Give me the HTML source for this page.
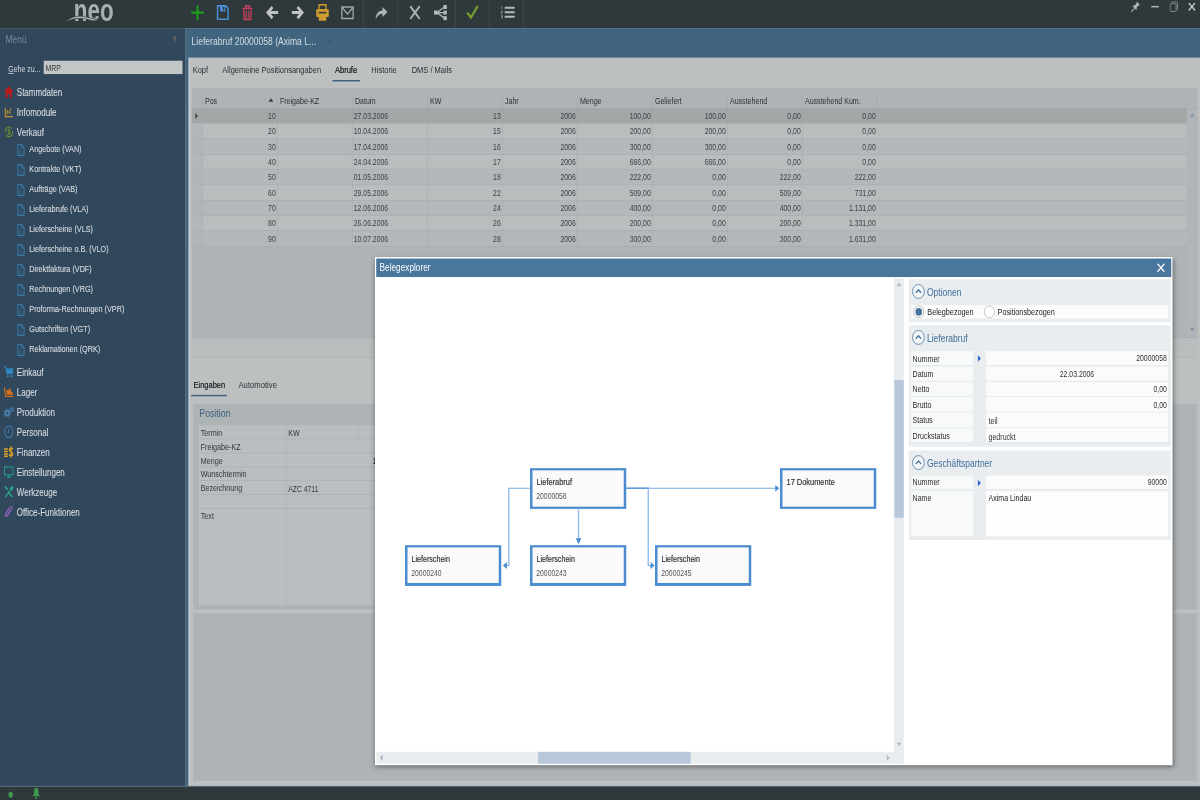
<!DOCTYPE html>
<html><head><meta charset="utf-8"><title>neo</title>
<style>
html,body{margin:0;padding:0;width:1200px;height:800px;overflow:hidden;background:#bcc0c1}
#root{position:absolute;left:0;top:0;width:1920px;height:1080px;transform-origin:0 0;transform:scale(0.625,0.740741);font-family:"Liberation Sans",sans-serif;overflow:hidden;will-change:opacity}
#root>div,#root>svg{position:absolute;display:block}
.t{white-space:nowrap;line-height:20px;height:20px;transform:scaleY(1.09)}
</style></head><body><div id="root">
<div style="left:0.0px;top:0.0px;width:1920.0px;height:37.8px;background:#2f393c"></div>
<div style="left:0.0px;top:37.8px;width:296.96px;height:1023.3px;background:#31475c"></div>
<div style="left:296.96px;top:37.8px;width:1623.04px;height:40.5px;background:#41647f"></div>
<div style="left:296.96px;top:78.3px;width:5.44px;height:982.8px;background:#41647f"></div>
<div style="left:302.24px;top:78.03px;width:1617.76px;height:983.07px;background:#bcc0c1"></div>
<div style="left:302.24px;top:78.03px;width:1.28px;height:983.07px;background:#cdd0d1"></div>
<div style="left:0.0px;top:1060.56px;width:1920.0px;height:1.22px;background:#3f6079"></div>
<div style="left:0.0px;top:1061.78px;width:1920.0px;height:18.22px;background:#2f393c"></div>
<div style="left:117.76px;top:-7.56px;font-size:43px;line-height:43px;height:43px;font-weight:bold;color:#a9aeb0;white-space:nowrap;transform-origin:0 0;transform:scaleX(.835)">neo</div>
<svg style="left:100px;top:15px" width="70" height="20"><path d="M6.2 14.3C10.4 10.99 15.07 8.63 19.27 7.84C27.21 6.9 36.54 7.68 44.01 9.65C48.68 10.99 53.34 12.02 57.08 10.36C53.34 13.51 47.74 12.72 43.08 11.54C36.54 9.73 28.14 9.18 19.74 10.05C15.07 10.6 10.4 12.33 6.2 14.3Z" fill="#a9aeb0" stroke="#2f393c" stroke-width="1.6" paint-order="stroke"/></svg>
<svg style="left:302.84px;top:3.74px" width="26" height="26" viewBox="0 0 26 26"><path d="M13 3.5V22.5M3 13H23" stroke="#1d9e1d" stroke-width="3.2" fill="none"/></svg>
<svg style="left:343.16px;top:3.74px" width="26" height="26" viewBox="0 0 26 26"><path d="M5 4H18.5L22 7.5V22H5Z" fill="none" stroke="#4a8fd6" stroke-width="2.2"/><rect x="9" y="4" width="8.5" height="7.5" fill="#4a8fd6"/><rect x="13.6" y="5.3" width="2.2" height="4.6" fill="#2f393c"/></svg>
<svg style="left:383.0px;top:3.74px" width="26" height="26" viewBox="0 0 26 26"><path d="M5 7.5H21M10 7V4.3H16V7" stroke="#c8405f" stroke-width="2.2" fill="none"/><path d="M7 9.5L7.8 22.2H18.2L19 9.5" fill="none" stroke="#c8405f" stroke-width="2.2"/><path d="M11 10.5V20.5M15 10.5V20.5" stroke="#c8405f" stroke-width="1.9"/></svg>
<svg style="left:422.84px;top:3.74px" width="26" height="26" viewBox="0 0 26 26"><path d="M22 13H8" stroke="#c0c3c4" stroke-width="4" fill="none"/><path d="M13 5.5L5.5 13L13 20.5" stroke="#c0c3c4" stroke-width="4" fill="none"/></svg>
<svg style="left:463.16px;top:3.74px" width="26" height="26" viewBox="0 0 26 26"><path d="M4 13H18" stroke="#c0c3c4" stroke-width="4" fill="none"/><path d="M13 5.5L20.5 13L13 20.5" stroke="#c0c3c4" stroke-width="4" fill="none"/></svg>
<svg style="left:503.0px;top:3.74px" width="26" height="26" viewBox="0 0 26 26"><rect x="7.5" y="2.5" width="11" height="7" fill="none" stroke="#cf9a2e" stroke-width="2.2"/><rect x="3" y="8.5" width="20" height="10.5" rx="1.5" fill="#cf9a2e"/><rect x="7" y="12" width="12" height="2.2" fill="#2f393c"/><rect x="7" y="16.5" width="12" height="7.5" fill="#cf9a2e"/></svg>
<svg style="left:542.84px;top:3.74px" width="26" height="26" viewBox="0 0 26 26"><rect x="4" y="5.5" width="18" height="15.5" fill="none" stroke="#a4a9ab" stroke-width="2"/><path d="M4.5 6.5L13 15L21.5 6.5" fill="none" stroke="#a4a9ab" stroke-width="2"/></svg>
<svg style="left:596.92px;top:3.74px" width="26" height="26" viewBox="0 0 26 26"><path d="M4 22C4.5 14 9 10.2 15 10.2V5.5L23 12.3L15 19V14.6C10.5 14.6 7 16.8 4 22Z" fill="#b0b4b6"/></svg>
<svg style="left:651.0px;top:3.74px" width="26" height="26" viewBox="0 0 26 26"><path d="M5.5 4.5L20.5 21.5M20.5 4.5L5.5 21.5" stroke="#adb1b3" stroke-width="3" fill="none"/></svg>
<svg style="left:691.8px;top:3.74px" width="26" height="26" viewBox="0 0 26 26"><path d="M7 13L19 5.5M7 13H19M7 13L19 20.5" stroke="#b5b9ba" stroke-width="1.7" fill="none"/><rect x="2.5" y="10.2" width="5.6" height="5.6" fill="#b5b9ba"/><rect x="17.5" y="2.8" width="5.4" height="5.4" fill="#b5b9ba"/><rect x="17.5" y="10.3" width="5.4" height="5.4" fill="#b5b9ba"/><rect x="17.5" y="17.8" width="5.4" height="5.4" fill="#b5b9ba"/></svg>
<svg style="left:743.48px;top:3.74px" width="26" height="26" viewBox="0 0 26 26"><path d="M4.5 13L10.5 19.5L21.5 4" stroke="#739c2c" stroke-width="3.5" fill="none"/></svg>
<svg style="left:799.0px;top:3.74px" width="26" height="26" viewBox="0 0 26 26"><path d="M8.5 6.5H24.5M8.5 12.6H24.5M8.5 18.7H24.5" stroke="#b5b9ba" stroke-width="2.6" fill="none"/><path d="M3.7 4.5V8.2M2.8 10.8H4.8V12.5H2.8V14.3H4.8M2.8 17H4.8V20.5H2.8M3.2 18.7H4.8" stroke="#b5b9ba" stroke-width="0.9" fill="none"/></svg>
<div style="left:581.44px;top:0.0px;width:0.96px;height:37.8px;background:#454f52"></div>
<div style="left:635.68px;top:0.0px;width:0.96px;height:37.8px;background:#454f52"></div>
<div style="left:728.48px;top:0.0px;width:0.96px;height:37.8px;background:#454f52"></div>
<div style="left:782.4px;top:0.0px;width:0.96px;height:37.8px;background:#454f52"></div>
<div style="left:837.44px;top:0.0px;width:0.96px;height:37.8px;background:#454f52"></div>
<svg style="left:1808.8px;top:0.78px" width="16" height="16" viewBox="0 0 16 16"><path d="M10 1L15 6L12.5 6.5L9.5 9.5C10 11 9.5 12.5 9 13L3 7C3.5 6.5 5 6 6.5 6.5L9.5 3.5Z" fill="#b5b9ba"/><path d="M5.5 10.5L1 15" stroke="#b5b9ba" stroke-width="1.4"/></svg>
<div style="left:1841.6px;top:8.37px;width:12.8px;height:1.89px;background:#b5b9ba"></div>
<svg style="left:1870.6px;top:0.78px" width="14" height="16" viewBox="0 0 14 16"><path d="M4 4V2.5Q4 1.5 5 1.5H12Q13 1.5 13 2.5V11Q13 12 12 12H11" fill="none" stroke="#8a9194" stroke-width="1.3"/><rect x="1.2" y="4" width="9.5" height="10.5" rx="1" fill="none" stroke="#8a9194" stroke-width="1.3"/></svg>
<svg style="left:1900.2px;top:2.45px" width="14" height="14" viewBox="0 0 14 14"><path d="M2 2L12 12M12 2L2 12" stroke="#c4c7c8" stroke-width="2" fill="none"/></svg>
<div class="t" style="left:8.8px;top:44.27px;font-size:13.5px;color:#74899c;">Menü</div>
<svg style="left:276.48px;top:48.0px" width="8" height="12" viewBox="0 0 8 12"><path d="M2.5 1H5.5V5L7 6.5H1L2.5 5Z M4 6.5V11" fill="#5f6468" stroke="#5f6468" stroke-width="0.8"/></svg>
<div class="t" style="left:13.12px;top:82.61px;font-size:11.2px;color:#d3d9de;"><u>G</u>ehe zu...</div>
<div style="left:70.4px;top:82.35px;width:221.6px;height:17.55px;background:#c3c6c7"></div>
<div class="t" style="left:72.8px;top:81.53px;font-size:11px;color:#333;">MRP</div>
<svg style="left:5.76px;top:115.2px" width="16" height="18" viewBox="0 0 16 18"><path d="M8 1L0.5 9H3V17H6.5V12H9.5V17H13V9H15.5Z" fill="#b81c1c"/></svg>
<div class="t" style="left:26.88px;top:114.74px;font-size:12.8px;color:#d6dce1;-webkit-text-stroke:0.15px #d6dce1">Stammdaten</div>
<svg style="left:5.76px;top:142.2px" width="16" height="18" viewBox="0 0 16 18"><path d="M2.5 3.5V15.3H14.5" fill="none" stroke="#c9962f" stroke-width="1.7"/><path d="M5.5 12.5V7L10 11.5V5.5L12.5 4.5" fill="none" stroke="#c9962f" stroke-width="1.3"/></svg>
<div class="t" style="left:26.88px;top:141.74px;font-size:12.8px;color:#d6dce1;-webkit-text-stroke:0.15px #d6dce1">Infomodule</div>
<svg style="left:5.76px;top:169.2px" width="16" height="18" viewBox="0 0 16 18"><ellipse cx="8.3" cy="9" rx="5.9" ry="6.6" fill="none" stroke="#6f9a28" stroke-width="1.5" stroke-dasharray="15 3.6"/><path d="M10.3 7C10 5.6 6.4 5.6 6.4 7.4C6.4 9.2 10.3 8.8 10.3 10.8C10.3 12.6 6.6 12.6 6.2 11.2M8.3 4.5V13.5" fill="none" stroke="#6f9a28" stroke-width="1.2"/></svg>
<div class="t" style="left:26.88px;top:168.74px;font-size:12.8px;color:#d6dce1;-webkit-text-stroke:0.15px #d6dce1">Verkauf</div>
<svg style="left:27.1px;top:193.87px" width="13" height="17" viewBox="0 0 13 17"><path d="M1.5 1.2H7.5L11.5 5.2V15.8H1.5Z" fill="none" stroke="#3a7aaa" stroke-width="1.6"/><path d="M7 1.2V5.8H11.5" fill="none" stroke="#3a7aaa" stroke-width="1.2"/><path d="M3.8 10H9M3.8 12.8H9" stroke="#3a7aaa" stroke-width="1"/></svg>
<div class="t" style="left:46.88px;top:191.02px;font-size:11.6px;color:#d6dce1;-webkit-text-stroke:0.15px #d6dce1">Angebote (VAN)</div>
<svg style="left:27.1px;top:220.87px" width="13" height="17" viewBox="0 0 13 17"><path d="M1.5 1.2H7.5L11.5 5.2V15.8H1.5Z" fill="none" stroke="#3a7aaa" stroke-width="1.6"/><path d="M7 1.2V5.8H11.5" fill="none" stroke="#3a7aaa" stroke-width="1.2"/><path d="M3.8 10H9M3.8 12.8H9" stroke="#3a7aaa" stroke-width="1"/></svg>
<div class="t" style="left:46.88px;top:218.02px;font-size:11.6px;color:#d6dce1;-webkit-text-stroke:0.15px #d6dce1">Kontrakte (VKT)</div>
<svg style="left:27.1px;top:247.87px" width="13" height="17" viewBox="0 0 13 17"><path d="M1.5 1.2H7.5L11.5 5.2V15.8H1.5Z" fill="none" stroke="#3a7aaa" stroke-width="1.6"/><path d="M7 1.2V5.8H11.5" fill="none" stroke="#3a7aaa" stroke-width="1.2"/><path d="M3.8 10H9M3.8 12.8H9" stroke="#3a7aaa" stroke-width="1"/></svg>
<div class="t" style="left:46.88px;top:245.02px;font-size:11.6px;color:#d6dce1;-webkit-text-stroke:0.15px #d6dce1">Aufträge (VAB)</div>
<svg style="left:27.1px;top:274.87px" width="13" height="17" viewBox="0 0 13 17"><path d="M1.5 1.2H7.5L11.5 5.2V15.8H1.5Z" fill="none" stroke="#3a7aaa" stroke-width="1.6"/><path d="M7 1.2V5.8H11.5" fill="none" stroke="#3a7aaa" stroke-width="1.2"/><path d="M3.8 10H9M3.8 12.8H9" stroke="#3a7aaa" stroke-width="1"/></svg>
<div class="t" style="left:46.88px;top:272.02px;font-size:11.6px;color:#d6dce1;-webkit-text-stroke:0.15px #d6dce1">Lieferabrufe (VLA)</div>
<svg style="left:27.1px;top:301.87px" width="13" height="17" viewBox="0 0 13 17"><path d="M1.5 1.2H7.5L11.5 5.2V15.8H1.5Z" fill="none" stroke="#3a7aaa" stroke-width="1.6"/><path d="M7 1.2V5.8H11.5" fill="none" stroke="#3a7aaa" stroke-width="1.2"/><path d="M3.8 10H9M3.8 12.8H9" stroke="#3a7aaa" stroke-width="1"/></svg>
<div class="t" style="left:46.88px;top:299.02px;font-size:11.6px;color:#d6dce1;-webkit-text-stroke:0.15px #d6dce1">Lieferscheine (VLS)</div>
<svg style="left:27.1px;top:328.87px" width="13" height="17" viewBox="0 0 13 17"><path d="M1.5 1.2H7.5L11.5 5.2V15.8H1.5Z" fill="none" stroke="#3a7aaa" stroke-width="1.6"/><path d="M7 1.2V5.8H11.5" fill="none" stroke="#3a7aaa" stroke-width="1.2"/><path d="M3.8 10H9M3.8 12.8H9" stroke="#3a7aaa" stroke-width="1"/></svg>
<div class="t" style="left:46.88px;top:326.02px;font-size:11.6px;color:#d6dce1;-webkit-text-stroke:0.15px #d6dce1">Lieferscheine o.B. (VLO)</div>
<svg style="left:27.1px;top:355.87px" width="13" height="17" viewBox="0 0 13 17"><path d="M1.5 1.2H7.5L11.5 5.2V15.8H1.5Z" fill="none" stroke="#3a7aaa" stroke-width="1.6"/><path d="M7 1.2V5.8H11.5" fill="none" stroke="#3a7aaa" stroke-width="1.2"/><path d="M3.8 10H9M3.8 12.8H9" stroke="#3a7aaa" stroke-width="1"/></svg>
<div class="t" style="left:46.88px;top:353.01px;font-size:11.6px;color:#d6dce1;-webkit-text-stroke:0.15px #d6dce1">Direktfaktura (VDF)</div>
<svg style="left:27.1px;top:382.87px" width="13" height="17" viewBox="0 0 13 17"><path d="M1.5 1.2H7.5L11.5 5.2V15.8H1.5Z" fill="none" stroke="#3a7aaa" stroke-width="1.6"/><path d="M7 1.2V5.8H11.5" fill="none" stroke="#3a7aaa" stroke-width="1.2"/><path d="M3.8 10H9M3.8 12.8H9" stroke="#3a7aaa" stroke-width="1"/></svg>
<div class="t" style="left:46.88px;top:380.01px;font-size:11.6px;color:#d6dce1;-webkit-text-stroke:0.15px #d6dce1">Rechnungen (VRG)</div>
<svg style="left:27.1px;top:409.87px" width="13" height="17" viewBox="0 0 13 17"><path d="M1.5 1.2H7.5L11.5 5.2V15.8H1.5Z" fill="none" stroke="#3a7aaa" stroke-width="1.6"/><path d="M7 1.2V5.8H11.5" fill="none" stroke="#3a7aaa" stroke-width="1.2"/><path d="M3.8 10H9M3.8 12.8H9" stroke="#3a7aaa" stroke-width="1"/></svg>
<div class="t" style="left:46.88px;top:407.01px;font-size:11.6px;color:#d6dce1;-webkit-text-stroke:0.15px #d6dce1">Proforma-Rechnungen (VPR)</div>
<svg style="left:27.1px;top:436.87px" width="13" height="17" viewBox="0 0 13 17"><path d="M1.5 1.2H7.5L11.5 5.2V15.8H1.5Z" fill="none" stroke="#3a7aaa" stroke-width="1.6"/><path d="M7 1.2V5.8H11.5" fill="none" stroke="#3a7aaa" stroke-width="1.2"/><path d="M3.8 10H9M3.8 12.8H9" stroke="#3a7aaa" stroke-width="1"/></svg>
<div class="t" style="left:46.88px;top:434.01px;font-size:11.6px;color:#d6dce1;-webkit-text-stroke:0.15px #d6dce1">Gutschriften (VGT)</div>
<svg style="left:27.1px;top:463.87px" width="13" height="17" viewBox="0 0 13 17"><path d="M1.5 1.2H7.5L11.5 5.2V15.8H1.5Z" fill="none" stroke="#3a7aaa" stroke-width="1.6"/><path d="M7 1.2V5.8H11.5" fill="none" stroke="#3a7aaa" stroke-width="1.2"/><path d="M3.8 10H9M3.8 12.8H9" stroke="#3a7aaa" stroke-width="1"/></svg>
<div class="t" style="left:46.88px;top:461.01px;font-size:11.6px;color:#d6dce1;-webkit-text-stroke:0.15px #d6dce1">Reklamationen (QRK)</div>
<svg style="left:5.76px;top:493.2px" width="16" height="18" viewBox="0 0 16 18"><path d="M0.5 2H3L5 11H13.5L15 5H4" fill="none" stroke="#2f86c0" stroke-width="1.6"/><path d="M4.5 5.5H14.5L13.3 10.5H5.5Z" fill="#2f86c0"/><circle cx="6.5" cy="14.5" r="1.7" fill="#2f86c0"/><circle cx="12.5" cy="14.5" r="1.7" fill="#2f86c0"/></svg>
<div class="t" style="left:26.88px;top:492.74px;font-size:12.8px;color:#d6dce1;-webkit-text-stroke:0.15px #d6dce1">Einkauf</div>
<svg style="left:5.76px;top:520.2px" width="16" height="18" viewBox="0 0 16 18"><path d="M1 3L3 15H15" fill="none" stroke="#d8701a" stroke-width="1.8"/><path d="M5 13L4 6L8 7.5L8.5 4L12 6L11.5 9.5L15 10L14.5 13Z" fill="#d8701a"/></svg>
<div class="t" style="left:26.88px;top:519.74px;font-size:12.8px;color:#d6dce1;-webkit-text-stroke:0.15px #d6dce1">Lager</div>
<svg style="left:5.76px;top:547.2px" width="16" height="18" viewBox="0 0 16 18"><circle cx="5.6" cy="10.6" r="4.4" fill="none" stroke="#4a86b8" stroke-width="2" stroke-dasharray="2 1.45"/><circle cx="5.6" cy="10.6" r="2.9" fill="none" stroke="#4a86b8" stroke-width="2"/><circle cx="12.8" cy="5.8" r="2.9" fill="none" stroke="#4a86b8" stroke-width="1.4" stroke-dasharray="1.4 0.88"/><circle cx="12.8" cy="5.8" r="1.8" fill="none" stroke="#4a86b8" stroke-width="1.3"/></svg>
<div class="t" style="left:26.88px;top:546.74px;font-size:12.8px;color:#d6dce1;-webkit-text-stroke:0.15px #d6dce1">Produktion</div>
<svg style="left:5.76px;top:574.2px" width="16" height="18" viewBox="0 0 16 18"><ellipse cx="8" cy="9" rx="6.8" ry="7.8" fill="none" stroke="#3f7fb5" stroke-width="1.4"/><path d="M8 5V9.5L5.5 11" fill="none" stroke="#3f7fb5" stroke-width="1.3"/></svg>
<div class="t" style="left:26.88px;top:573.74px;font-size:12.8px;color:#d6dce1;-webkit-text-stroke:0.15px #d6dce1">Personal</div>
<svg style="left:5.76px;top:601.2px" width="16" height="18" viewBox="0 0 16 18"><path d="M0.5 5H6.5M0.5 8.5H6.5M0.5 12H6.5M0.5 15H6.5" stroke="#e0a020" stroke-width="2"/><path d="M14.5 5.5C14 3.5 9 3.5 9 6.5C9 9.5 14.5 8.5 14.5 12C14.5 15 9 15 8.5 12.5M11.7 1.5V17" fill="none" stroke="#e0a020" stroke-width="2"/></svg>
<div class="t" style="left:26.88px;top:600.74px;font-size:12.8px;color:#d6dce1;-webkit-text-stroke:0.15px #d6dce1">Finanzen</div>
<svg style="left:5.76px;top:628.2px" width="16" height="18" viewBox="0 0 16 18"><rect x="1" y="2.5" width="14" height="10.5" fill="none" stroke="#1f9a94" stroke-width="1.6"/><path d="M5 16H11M8 13V16" stroke="#1f9a94" stroke-width="1.6"/></svg>
<div class="t" style="left:26.88px;top:627.74px;font-size:12.8px;color:#d6dce1;-webkit-text-stroke:0.15px #d6dce1">Einstellungen</div>
<svg style="left:5.76px;top:655.2px" width="16" height="18" viewBox="0 0 16 18"><path d="M2 2L6 6M13.5 16L7 8.5" stroke="#2aa88a" stroke-width="2.4"/><path d="M2.5 16L9 9M10 8L11 4.5L14 2L15 3L13 5.5L14 6.5" stroke="#2aa88a" stroke-width="2" fill="none"/><path d="M1 1L4.5 2.5L3 4Z" fill="#2aa88a"/></svg>
<div class="t" style="left:26.88px;top:654.74px;font-size:12.8px;color:#d6dce1;-webkit-text-stroke:0.15px #d6dce1">Werkzeuge</div>
<svg style="left:5.76px;top:682.2px" width="16" height="18" viewBox="0 0 16 18"><path d="M11 5.5L5 13C4 14.5 2 13 3 11.5L10 3C12 0.8 15 3 13.2 5.3L6.5 14C4.5 16.5 0.5 14 2.8 11L8.5 4" fill="none" stroke="#8a62b5" stroke-width="1.4"/></svg>
<div class="t" style="left:26.88px;top:681.74px;font-size:12.8px;color:#d6dce1;-webkit-text-stroke:0.15px #d6dce1">Office-Funktionen</div>
<div style="left:0.0px;top:0.0px;width:0.0px;height:0.0px;"></div>
<svg style="left:12.8px;top:1067.58px" width="8" height="10" viewBox="0 0 8 10"><ellipse cx="4" cy="5" rx="3.6" ry="4" fill="#3f9a4c"/></svg>
<svg style="left:51.08px;top:1063.36px" width="14" height="16" viewBox="0 0 14 16"><path d="M7 0.5C4.5 0.5 3.5 3 3.5 6C3.5 9 2.5 11 1 12H13C11.5 11 10.5 9 10.5 6C10.5 3 9.5 0.5 7 0.5Z M5.8 12.8H8.2V15.5H5.8Z" fill="#3f9a4c"/></svg>
<div class="t" style="left:306.4px;top:47.38px;font-size:13.7px;color:#d5dde4;">Lieferabruf 20000058 (Axima L...</div>
<div class="t" style="left:524.0px;top:47.38px;font-size:14px;color:#34527a;">×</div>
<div class="t" style="left:308.32px;top:84.1px;font-size:12px;color:#2b2f31;">Kopf</div>
<div class="t" style="left:355.68px;top:84.1px;font-size:12px;color:#2b2f31;">Allgemeine Positionsangaben</div>
<div class="t" style="left:536.0px;top:84.1px;font-size:12px;color:#15181a;-webkit-text-stroke:0.3px #15181a">Abrufe</div>
<div class="t" style="left:594.08px;top:84.1px;font-size:12px;color:#2b2f31;">Historie</div>
<div class="t" style="left:658.72px;top:84.1px;font-size:12px;color:#2b2f31;">DMS / Mails</div>
<div style="left:531.68px;top:108.0px;width:44.32px;height:2.03px;background:#3d627f"></div>
<div style="left:307.2px;top:119.48px;width:1609.28px;height:336.15px;background:#aeb3b6"></div>
<div style="left:307.2px;top:145.8px;width:1592.0px;height:20.7px;background:#a3a7a8"></div>
<div style="left:307.2px;top:166.5px;width:1592.0px;height:20.7px;background:#b9bdbe"></div>
<div style="left:307.2px;top:166.16px;width:1592.0px;height:0.68px;background:#abafb1"></div>
<div style="left:307.2px;top:187.2px;width:1592.0px;height:20.7px;background:#b4b8ba"></div>
<div style="left:307.2px;top:186.86px;width:1592.0px;height:0.68px;background:#abafb1"></div>
<div style="left:307.2px;top:207.9px;width:1592.0px;height:20.7px;background:#b9bdbe"></div>
<div style="left:307.2px;top:207.56px;width:1592.0px;height:0.68px;background:#abafb1"></div>
<div style="left:307.2px;top:228.6px;width:1592.0px;height:20.7px;background:#b4b8ba"></div>
<div style="left:307.2px;top:228.26px;width:1592.0px;height:0.68px;background:#abafb1"></div>
<div style="left:307.2px;top:249.3px;width:1592.0px;height:20.7px;background:#b9bdbe"></div>
<div style="left:307.2px;top:248.96px;width:1592.0px;height:0.68px;background:#abafb1"></div>
<div style="left:307.2px;top:270.0px;width:1592.0px;height:20.7px;background:#b4b8ba"></div>
<div style="left:307.2px;top:269.66px;width:1592.0px;height:0.68px;background:#abafb1"></div>
<div style="left:307.2px;top:290.7px;width:1592.0px;height:20.7px;background:#b9bdbe"></div>
<div style="left:307.2px;top:290.36px;width:1592.0px;height:0.68px;background:#abafb1"></div>
<div style="left:307.2px;top:311.4px;width:1592.0px;height:20.7px;background:#b4b8ba"></div>
<div style="left:307.2px;top:311.06px;width:1592.0px;height:0.68px;background:#abafb1"></div>
<div style="left:307.2px;top:331.76px;width:1592.0px;height:0.68px;background:#a9adaf"></div>
<div style="left:307.2px;top:145.8px;width:16.4px;height:186.3px;background:rgba(174,179,182,.55)"></div>
<div style="left:307.2px;top:145.8px;width:16.4px;height:20.7px;background:#a3a7a8"></div>
<div style="left:323.12px;top:125.55px;width:0.96px;height:20.25px;background:#a2a7aa"></div>
<div style="left:443.12px;top:125.55px;width:0.96px;height:20.25px;background:#a2a7aa"></div>
<div style="left:563.12px;top:125.55px;width:0.96px;height:20.25px;background:#a2a7aa"></div>
<div style="left:683.12px;top:125.55px;width:0.96px;height:20.25px;background:#a2a7aa"></div>
<div style="left:803.12px;top:125.55px;width:0.96px;height:20.25px;background:#a2a7aa"></div>
<div style="left:923.12px;top:125.55px;width:0.96px;height:20.25px;background:#a2a7aa"></div>
<div style="left:1043.12px;top:125.55px;width:0.96px;height:20.25px;background:#a2a7aa"></div>
<div style="left:1163.12px;top:125.55px;width:0.96px;height:20.25px;background:#a2a7aa"></div>
<div style="left:1283.12px;top:125.55px;width:0.96px;height:20.25px;background:#a2a7aa"></div>
<div style="left:1403.12px;top:125.55px;width:0.96px;height:20.25px;background:#a2a7aa"></div>
<div style="left:323.12px;top:145.8px;width:0.96px;height:186.3px;background:rgba(150,155,158,.45)"></div>
<div style="left:443.12px;top:145.8px;width:0.96px;height:186.3px;background:rgba(150,155,158,.45)"></div>
<div style="left:563.12px;top:145.8px;width:0.96px;height:186.3px;background:rgba(150,155,158,.45)"></div>
<div style="left:683.12px;top:145.8px;width:0.96px;height:186.3px;background:rgba(150,155,158,.45)"></div>
<div style="left:803.12px;top:145.8px;width:0.96px;height:186.3px;background:rgba(150,155,158,.45)"></div>
<div style="left:923.12px;top:145.8px;width:0.96px;height:186.3px;background:rgba(150,155,158,.45)"></div>
<div style="left:1043.12px;top:145.8px;width:0.96px;height:186.3px;background:rgba(150,155,158,.45)"></div>
<div style="left:1163.12px;top:145.8px;width:0.96px;height:186.3px;background:rgba(150,155,158,.45)"></div>
<div style="left:1283.12px;top:145.8px;width:0.96px;height:186.3px;background:rgba(150,155,158,.45)"></div>
<div class="t" style="left:327.92px;top:125.95px;font-size:11.3px;color:#2e3234;">Pos</div>
<div class="t" style="left:447.92px;top:125.95px;font-size:11.3px;color:#2e3234;">Freigabe-KZ</div>
<div class="t" style="left:567.92px;top:125.95px;font-size:11.3px;color:#2e3234;">Datum</div>
<div class="t" style="left:687.92px;top:125.95px;font-size:11.3px;color:#2e3234;">KW</div>
<div class="t" style="left:807.92px;top:125.95px;font-size:11.3px;color:#2e3234;">Jahr</div>
<div class="t" style="left:927.92px;top:125.95px;font-size:11.3px;color:#2e3234;">Menge</div>
<div class="t" style="left:1047.92px;top:125.95px;font-size:11.3px;color:#2e3234;">Geliefert</div>
<div class="t" style="left:1167.92px;top:125.95px;font-size:11.3px;color:#2e3234;">Ausstehend</div>
<div class="t" style="left:1287.92px;top:125.95px;font-size:11.3px;color:#2e3234;">Ausstehend Kum.</div>
<svg style="left:428.78px;top:132.41px" width="9" height="6" viewBox="0 0 9 6"><path d="M0.5 5.5L4.5 0.5L8.5 5.5Z" fill="#3a3e40"/></svg>
<svg style="left:312.38px;top:151.56px" width="5" height="9" viewBox="0 0 5 9"><path d="M0.5 0.5L4.5 4.5L0.5 8.5Z" fill="#3a3e40"/></svg>
<div class="t" style="right:1478.8px;text-align:right;top:146.15px;font-size:11px;color:#3a3f42;">10</div>
<div class="t" style="left:566.0px;top:146.15px;font-size:11px;color:#3a3f42;">27.03.2006</div>
<div class="t" style="right:1118.8px;text-align:right;top:146.15px;font-size:11px;color:#3a3f42;">13</div>
<div class="t" style="right:998.8px;text-align:right;top:146.15px;font-size:11px;color:#3a3f42;">2006</div>
<div class="t" style="right:878.8px;text-align:right;top:146.15px;font-size:11px;color:#3a3f42;">100,00</div>
<div class="t" style="right:758.8px;text-align:right;top:146.15px;font-size:11px;color:#3a3f42;">100,00</div>
<div class="t" style="right:638.8px;text-align:right;top:146.15px;font-size:11px;color:#3a3f42;">0,00</div>
<div class="t" style="right:518.8px;text-align:right;top:146.15px;font-size:11px;color:#3a3f42;">0,00</div>
<div class="t" style="right:1478.8px;text-align:right;top:166.85px;font-size:11px;color:#3a3f42;">20</div>
<div class="t" style="left:566.0px;top:166.85px;font-size:11px;color:#3a3f42;">10.04.2006</div>
<div class="t" style="right:1118.8px;text-align:right;top:166.85px;font-size:11px;color:#3a3f42;">15</div>
<div class="t" style="right:998.8px;text-align:right;top:166.85px;font-size:11px;color:#3a3f42;">2006</div>
<div class="t" style="right:878.8px;text-align:right;top:166.85px;font-size:11px;color:#3a3f42;">200,00</div>
<div class="t" style="right:758.8px;text-align:right;top:166.85px;font-size:11px;color:#3a3f42;">200,00</div>
<div class="t" style="right:638.8px;text-align:right;top:166.85px;font-size:11px;color:#3a3f42;">0,00</div>
<div class="t" style="right:518.8px;text-align:right;top:166.85px;font-size:11px;color:#3a3f42;">0,00</div>
<div class="t" style="right:1478.8px;text-align:right;top:187.55px;font-size:11px;color:#3a3f42;">30</div>
<div class="t" style="left:566.0px;top:187.55px;font-size:11px;color:#3a3f42;">17.04.2006</div>
<div class="t" style="right:1118.8px;text-align:right;top:187.55px;font-size:11px;color:#3a3f42;">16</div>
<div class="t" style="right:998.8px;text-align:right;top:187.55px;font-size:11px;color:#3a3f42;">2006</div>
<div class="t" style="right:878.8px;text-align:right;top:187.55px;font-size:11px;color:#3a3f42;">300,00</div>
<div class="t" style="right:758.8px;text-align:right;top:187.55px;font-size:11px;color:#3a3f42;">300,00</div>
<div class="t" style="right:638.8px;text-align:right;top:187.55px;font-size:11px;color:#3a3f42;">0,00</div>
<div class="t" style="right:518.8px;text-align:right;top:187.55px;font-size:11px;color:#3a3f42;">0,00</div>
<div class="t" style="right:1478.8px;text-align:right;top:208.25px;font-size:11px;color:#3a3f42;">40</div>
<div class="t" style="left:566.0px;top:208.25px;font-size:11px;color:#3a3f42;">24.04.2006</div>
<div class="t" style="right:1118.8px;text-align:right;top:208.25px;font-size:11px;color:#3a3f42;">17</div>
<div class="t" style="right:998.8px;text-align:right;top:208.25px;font-size:11px;color:#3a3f42;">2006</div>
<div class="t" style="right:878.8px;text-align:right;top:208.25px;font-size:11px;color:#3a3f42;">666,00</div>
<div class="t" style="right:758.8px;text-align:right;top:208.25px;font-size:11px;color:#3a3f42;">666,00</div>
<div class="t" style="right:638.8px;text-align:right;top:208.25px;font-size:11px;color:#3a3f42;">0,00</div>
<div class="t" style="right:518.8px;text-align:right;top:208.25px;font-size:11px;color:#3a3f42;">0,00</div>
<div class="t" style="right:1478.8px;text-align:right;top:228.95px;font-size:11px;color:#3a3f42;">50</div>
<div class="t" style="left:566.0px;top:228.95px;font-size:11px;color:#3a3f42;">01.05.2006</div>
<div class="t" style="right:1118.8px;text-align:right;top:228.95px;font-size:11px;color:#3a3f42;">18</div>
<div class="t" style="right:998.8px;text-align:right;top:228.95px;font-size:11px;color:#3a3f42;">2006</div>
<div class="t" style="right:878.8px;text-align:right;top:228.95px;font-size:11px;color:#3a3f42;">222,00</div>
<div class="t" style="right:758.8px;text-align:right;top:228.95px;font-size:11px;color:#3a3f42;">0,00</div>
<div class="t" style="right:638.8px;text-align:right;top:228.95px;font-size:11px;color:#3a3f42;">222,00</div>
<div class="t" style="right:518.8px;text-align:right;top:228.95px;font-size:11px;color:#3a3f42;">222,00</div>
<div class="t" style="right:1478.8px;text-align:right;top:249.65px;font-size:11px;color:#3a3f42;">60</div>
<div class="t" style="left:566.0px;top:249.65px;font-size:11px;color:#3a3f42;">29.05.2006</div>
<div class="t" style="right:1118.8px;text-align:right;top:249.65px;font-size:11px;color:#3a3f42;">22</div>
<div class="t" style="right:998.8px;text-align:right;top:249.65px;font-size:11px;color:#3a3f42;">2006</div>
<div class="t" style="right:878.8px;text-align:right;top:249.65px;font-size:11px;color:#3a3f42;">509,00</div>
<div class="t" style="right:758.8px;text-align:right;top:249.65px;font-size:11px;color:#3a3f42;">0,00</div>
<div class="t" style="right:638.8px;text-align:right;top:249.65px;font-size:11px;color:#3a3f42;">509,00</div>
<div class="t" style="right:518.8px;text-align:right;top:249.65px;font-size:11px;color:#3a3f42;">731,00</div>
<div class="t" style="right:1478.8px;text-align:right;top:270.35px;font-size:11px;color:#3a3f42;">70</div>
<div class="t" style="left:566.0px;top:270.35px;font-size:11px;color:#3a3f42;">12.06.2006</div>
<div class="t" style="right:1118.8px;text-align:right;top:270.35px;font-size:11px;color:#3a3f42;">24</div>
<div class="t" style="right:998.8px;text-align:right;top:270.35px;font-size:11px;color:#3a3f42;">2006</div>
<div class="t" style="right:878.8px;text-align:right;top:270.35px;font-size:11px;color:#3a3f42;">400,00</div>
<div class="t" style="right:758.8px;text-align:right;top:270.35px;font-size:11px;color:#3a3f42;">0,00</div>
<div class="t" style="right:638.8px;text-align:right;top:270.35px;font-size:11px;color:#3a3f42;">400,00</div>
<div class="t" style="right:518.8px;text-align:right;top:270.35px;font-size:11px;color:#3a3f42;">1.131,00</div>
<div class="t" style="right:1478.8px;text-align:right;top:291.05px;font-size:11px;color:#3a3f42;">80</div>
<div class="t" style="left:566.0px;top:291.05px;font-size:11px;color:#3a3f42;">26.06.2006</div>
<div class="t" style="right:1118.8px;text-align:right;top:291.05px;font-size:11px;color:#3a3f42;">26</div>
<div class="t" style="right:998.8px;text-align:right;top:291.05px;font-size:11px;color:#3a3f42;">2006</div>
<div class="t" style="right:878.8px;text-align:right;top:291.05px;font-size:11px;color:#3a3f42;">200,00</div>
<div class="t" style="right:758.8px;text-align:right;top:291.05px;font-size:11px;color:#3a3f42;">0,00</div>
<div class="t" style="right:638.8px;text-align:right;top:291.05px;font-size:11px;color:#3a3f42;">200,00</div>
<div class="t" style="right:518.8px;text-align:right;top:291.05px;font-size:11px;color:#3a3f42;">1.331,00</div>
<div class="t" style="right:1478.8px;text-align:right;top:311.75px;font-size:11px;color:#3a3f42;">90</div>
<div class="t" style="left:566.0px;top:311.75px;font-size:11px;color:#3a3f42;">10.07.2006</div>
<div class="t" style="right:1118.8px;text-align:right;top:311.75px;font-size:11px;color:#3a3f42;">28</div>
<div class="t" style="right:998.8px;text-align:right;top:311.75px;font-size:11px;color:#3a3f42;">2006</div>
<div class="t" style="right:878.8px;text-align:right;top:311.75px;font-size:11px;color:#3a3f42;">300,00</div>
<div class="t" style="right:758.8px;text-align:right;top:311.75px;font-size:11px;color:#3a3f42;">0,00</div>
<div class="t" style="right:638.8px;text-align:right;top:311.75px;font-size:11px;color:#3a3f42;">300,00</div>
<div class="t" style="right:518.8px;text-align:right;top:311.75px;font-size:11px;color:#3a3f42;">1.631,00</div>
<div style="left:1899.2px;top:146.21px;width:17.28px;height:309.42px;background:#b0b5b8"></div>
<div style="left:307.2px;top:145.67px;width:1609.28px;height:0.81px;background:#a4a9ac"></div>
<svg style="left:1902.7px;top:151.98px" width="9" height="6" viewBox="0 0 9 6"><path d="M0.5 5.5L4.5 0.5L8.5 5.5Z" fill="#8196ab"/></svg>
<svg style="left:1902.7px;top:441.96px" width="9" height="6" viewBox="0 0 9 6"><path d="M0.5 0.5L4.5 5.5L8.5 0.5Z" fill="#8196ab"/></svg>
<div style="left:307.2px;top:455.63px;width:1609.28px;height:27.27px;background:#b9bdbe"></div>
<div style="left:307.2px;top:455.36px;width:1609.28px;height:0.81px;background:#a6abad"></div>
<div style="left:307.2px;top:482.36px;width:1609.28px;height:0.81px;background:#b1b5b7"></div>
<div class="t" style="left:309.6px;top:509.75px;font-size:12px;color:#15181a;-webkit-text-stroke:0.25px #15181a">Eingaben</div>
<div class="t" style="left:381.6px;top:509.75px;font-size:12.3px;color:#2b2f31;">Automotive</div>
<div style="left:305.6px;top:532.98px;width:57.6px;height:2.02px;background:#3d627f"></div>
<div style="left:308.8px;top:545.4px;width:1606.4px;height:278.1px;background:#aeb3b6"></div>
<div class="t" style="left:318.88px;top:547.82px;font-size:14px;color:#3d627f;">Position</div>
<div style="left:318.4px;top:573.75px;width:1553.6px;height:243.0px;background:#babec0"></div>
<div style="left:318.4px;top:592.18px;width:1553.6px;height:0.67px;background:#acb0b2"></div>
<div style="left:318.4px;top:610.94px;width:1553.6px;height:0.68px;background:#acb0b2"></div>
<div style="left:318.4px;top:629.71px;width:1553.6px;height:0.67px;background:#acb0b2"></div>
<div style="left:318.4px;top:648.47px;width:1553.6px;height:0.68px;background:#acb0b2"></div>
<div style="left:318.4px;top:667.24px;width:1553.6px;height:0.67px;background:#acb0b2"></div>
<div style="left:318.4px;top:686.0px;width:1553.6px;height:0.68px;background:#acb0b2"></div>
<div style="left:457.6px;top:573.75px;width:0.8px;height:243.0px;background:#acb0b2"></div>
<div style="left:571.52px;top:573.75px;width:0.8px;height:18.76px;background:#acb0b2"></div>
<div class="t" style="left:321.12px;top:574.01px;font-size:11.5px;color:#33373a;">Termin</div>
<div class="t" style="left:321.12px;top:592.78px;font-size:11.5px;color:#33373a;">Freigabe-KZ</div>
<div class="t" style="left:321.12px;top:611.54px;font-size:11.5px;color:#33373a;">Menge</div>
<div class="t" style="left:321.12px;top:630.31px;font-size:11.5px;color:#33373a;">Wunschtermin</div>
<div class="t" style="left:321.12px;top:649.07px;font-size:11.5px;color:#33373a;">Bezeichnung</div>
<div class="t" style="left:321.12px;top:685.79px;font-size:11.5px;color:#33373a;">Text</div>
<div class="t" style="left:461.28px;top:574.01px;font-size:11.3px;color:#33373a;">KW</div>
<div class="t" style="left:461.28px;top:649.61px;font-size:10.9px;color:#33373a;">AZC 4711</div>
<div class="t" style="left:596.0px;top:612.08px;font-size:11.3px;color:#33373a;">1</div>
<div style="left:308.8px;top:827.55px;width:1606.4px;height:226.8px;background:#aeb3b6"></div>
<div style="left:600.0px;top:346.95px;width:1276.32px;height:685.8px;background:#fff;box-shadow:1px 3px 7px 1px rgba(0,0,0,.38)"></div>
<div style="left:601.6px;top:348.98px;width:1272.0px;height:24.97px;background:#48769c"></div>
<div class="t" style="left:607.36px;top:352.34px;font-size:13.2px;color:#fff;">Belegexplorer</div>
<svg style="left:1850.62px;top:354.89px" width="13" height="13" viewBox="0 0 13 13"><path d="M1 1L12 12M12 1L1 12" stroke="#fff" stroke-width="1.9" fill="none"/></svg>
<div style="left:1430.4px;top:375.98px;width:16.0px;height:655.42px;background:#e9edf0"></div>
<div style="left:601.6px;top:1014.66px;width:844.8px;height:16.74px;background:#e9edf0"></div>
<div style="left:1430.88px;top:512.6px;width:15.04px;height:186.02px;background:#b7c8da"></div>
<div style="left:860.8px;top:1015.2px;width:244.0px;height:15.8px;background:#b7c8da"></div>
<svg style="left:1433.9px;top:380.67px" width="9" height="6" viewBox="0 0 9 6"><path d="M0.5 5.5L4.5 0.5L8.5 5.5Z" fill="#a9bbcc"/></svg>
<svg style="left:1433.9px;top:1001.8px" width="9" height="6" viewBox="0 0 9 6"><path d="M0.5 0.5L4.5 5.5L8.5 0.5Z" fill="#a9bbcc"/></svg>
<svg style="left:606.6px;top:1017.9px" width="6" height="10" viewBox="0 0 6 10"><path d="M5.5 0.5L0.5 5L5.5 9.5Z" fill="#a9bbcc"/></svg>
<svg style="left:1418.28px;top:1017.9px" width="6" height="10" viewBox="0 0 6 10"><path d="M0.5 0.5L5.5 5L0.5 9.5Z" fill="#a9bbcc"/></svg>
<div style="left:848.0px;top:631.8px;width:154.08px;height:54.95px;background:#4b8bd0"></div>
<div style="left:851.6px;top:634.91px;width:146.88px;height:48.73px;background:#fafafa"></div>
<div class="t" style="left:858.4px;top:640.16px;font-size:11.9px;color:#2d2d2d;-webkit-text-stroke:0.2px #2d2d2d">Lieferabruf</div>
<div class="t" style="left:858.08px;top:658.93px;font-size:10.9px;color:#555;">20000058</div>
<div style="left:1248.0px;top:631.8px;width:154.08px;height:54.95px;background:#4b8bd0"></div>
<div style="left:1251.6px;top:634.91px;width:146.88px;height:48.73px;background:#fafafa"></div>
<div class="t" style="left:1258.4px;top:640.16px;font-size:11.9px;color:#2d2d2d;-webkit-text-stroke:0.2px #2d2d2d">17 Dokumente</div>
<div style="left:648.0px;top:735.75px;width:154.08px;height:54.81px;background:#4b8bd0"></div>
<div style="left:651.6px;top:738.86px;width:146.88px;height:48.6px;background:#fafafa"></div>
<div class="t" style="left:658.4px;top:744.11px;font-size:11.4px;color:#2d2d2d;-webkit-text-stroke:0.2px #2d2d2d">Lieferschein</div>
<div class="t" style="left:658.08px;top:762.88px;font-size:10.9px;color:#555;">20000240</div>
<div style="left:848.0px;top:735.75px;width:154.08px;height:54.81px;background:#4b8bd0"></div>
<div style="left:851.6px;top:738.86px;width:146.88px;height:48.6px;background:#fafafa"></div>
<div class="t" style="left:858.4px;top:744.11px;font-size:11.4px;color:#2d2d2d;-webkit-text-stroke:0.2px #2d2d2d">Lieferschein</div>
<div class="t" style="left:858.08px;top:762.88px;font-size:10.9px;color:#555;">20000243</div>
<div style="left:1048.0px;top:735.75px;width:154.08px;height:54.81px;background:#4b8bd0"></div>
<div style="left:1051.6px;top:738.86px;width:146.88px;height:48.6px;background:#fafafa"></div>
<div class="t" style="left:1058.4px;top:744.11px;font-size:11.4px;color:#2d2d2d;-webkit-text-stroke:0.2px #2d2d2d">Lieferschein</div>
<div class="t" style="left:1058.08px;top:762.88px;font-size:10.9px;color:#555;">20000245</div>
<svg style="left:601.6px;top:375.98px" width="828.8000000000001" height="638.68"><path d="M211.51999999999998 283.23H246.39999999999998" fill="none" stroke="#76abe1" stroke-width="1.5"/><path d="M212.15999999999997 282.81999999999994V387.85" fill="none" stroke="#8db8e7" stroke-width="2.1"/><path d="M204.79999999999995 387.44999999999993H212.79999999999995" fill="none" stroke="#76abe1" stroke-width="1.5"/><path d="M323.67999999999995 310.5V354.37" fill="none" stroke="#8db8e7" stroke-width="2.1"/><path d="M400.0 283.23H639.9999999999999" fill="none" stroke="#76abe1" stroke-width="1.5"/><path d="M400.0 283.23H436.15999999999997" fill="none" stroke="#5d9ade" stroke-width="1.9"/><path d="M435.19999999999993 282.81999999999994V387.85" fill="none" stroke="#8db8e7" stroke-width="2.1"/><path d="M434.56000000000006 387.44999999999993H441.6" fill="none" stroke="#76abe1" stroke-width="1.5"/><path d="M202.55999999999995 387.44999999999993L208.95999999999995 382.8499999999999V392.04999999999995Z" fill="#4b8bd0"/><path d="M323.67999999999995 358.68999999999994L319.17999999999995 350.68999999999994H328.17999999999995Z" fill="#4b8bd0"/><path d="M644.8000000000001 283.23L638.4000000000001 278.63V287.83000000000004Z" fill="#4b8bd0"/><path d="M445.2800000000001 387.44999999999993L438.8800000000001 382.8499999999999V392.04999999999995Z" fill="#4b8bd0"/></svg>
<div style="left:1454.4px;top:376.92px;width:418.72px;height:57.78px;background:#e9edf0"></div>
<svg style="left:1458.94px;top:383.03px" width="21" height="21" viewBox="0 0 21 21"><circle cx="10.5" cy="10.5" r="9.4" fill="#f4f7f9" stroke="#4f7ca5" stroke-width="1.2"/><path d="M6.3 12.3L10.5 8.2L14.7 12.3" fill="none" stroke="#3d6a94" stroke-width="1.8"/></svg>
<div class="t" style="left:1483.2px;top:385.01px;font-size:13.6px;color:#3f6d98;">Optionen</div>
<div style="left:1457.6px;top:411.75px;width:411.2px;height:18.5px;background:#fcfcfc"></div>
<svg style="left:1461.24px;top:412.06px" width="18" height="18" viewBox="0 0 18 18"><circle cx="9" cy="9" r="8" fill="#fff" stroke="#9aa3ab" stroke-width="1"/><circle cx="9" cy="9" r="5.3" fill="#44739d"/></svg>
<div class="t" style="left:1483.68px;top:411.2px;font-size:11.6px;color:#222;">Belegbezogen</div>
<svg style="left:1573.88px;top:412.06px" width="18" height="18" viewBox="0 0 18 18"><circle cx="9" cy="9" r="8" fill="#fff" stroke="#a7afb6" stroke-width="1"/></svg>
<div class="t" style="left:1596.16px;top:411.2px;font-size:11.6px;color:#222;">Positionsbezogen</div>
<div style="left:1454.4px;top:439.02px;width:418.72px;height:164.16px;background:#e9edf0"></div>
<svg style="left:1458.94px;top:445.13px" width="21" height="21" viewBox="0 0 21 21"><circle cx="10.5" cy="10.5" r="9.4" fill="#f4f7f9" stroke="#4f7ca5" stroke-width="1.2"/><path d="M6.3 12.3L10.5 8.2L14.7 12.3" fill="none" stroke="#3d6a94" stroke-width="1.8"/></svg>
<div class="t" style="left:1483.2px;top:447.11px;font-size:13.6px;color:#3f6d98;">Lieferabruf</div>
<div style="left:1457.6px;top:473.85px;width:99.2px;height:20.25px;background:#f8f9f9;border-bottom:1.2px solid #e0e7ef;box-sizing:border-box"></div>
<div style="left:1578.08px;top:473.85px;width:290.72px;height:20.25px;background:#fbfbfb;border-bottom:1.2px solid #e0e7ef;box-sizing:border-box"></div>
<div class="t" style="left:1460.16px;top:473.57px;font-size:11.3px;color:#2a2a2a;">Nummer</div>
<svg style="left:1563.88px;top:479.38px" width="6" height="10" viewBox="0 0 6 10"><path d="M0.5 0.5L5.5 5L0.5 9.5Z" fill="#2a66d9"/></svg>
<div class="t" style="right:53.12px;text-align:right;top:473.3px;font-size:11px;color:#333;">20000058</div>
<div style="left:1457.6px;top:494.71px;width:99.2px;height:20.25px;background:#f8f9f9;border-bottom:1.2px solid #e0e7ef;box-sizing:border-box"></div>
<div style="left:1578.08px;top:494.71px;width:290.72px;height:20.25px;background:#fbfbfb;border-bottom:1.2px solid #e0e7ef;box-sizing:border-box"></div>
<div class="t" style="left:1460.16px;top:494.43px;font-size:11.3px;color:#2a2a2a;">Datum</div>
<div class="t" style="left:1523.2px;width:400px;text-align:center;top:494.29px;font-size:11px;color:#333;">22.03.2006</div>
<div style="left:1457.6px;top:515.57px;width:99.2px;height:20.25px;background:#f8f9f9;border-bottom:1.2px solid #e0e7ef;box-sizing:border-box"></div>
<div style="left:1578.08px;top:515.57px;width:290.72px;height:20.25px;background:#fbfbfb;border-bottom:1.2px solid #e0e7ef;box-sizing:border-box"></div>
<div class="t" style="left:1460.16px;top:515.28px;font-size:11.3px;color:#2a2a2a;">Netto</div>
<div class="t" style="right:53.12px;text-align:right;top:515.01px;font-size:11px;color:#333;">0,00</div>
<div style="left:1457.6px;top:536.42px;width:99.2px;height:20.25px;background:#f8f9f9;border-bottom:1.2px solid #e0e7ef;box-sizing:border-box"></div>
<div style="left:1578.08px;top:536.42px;width:290.72px;height:20.25px;background:#fbfbfb;border-bottom:1.2px solid #e0e7ef;box-sizing:border-box"></div>
<div class="t" style="left:1460.16px;top:536.14px;font-size:11.3px;color:#2a2a2a;">Brutto</div>
<div class="t" style="right:53.12px;text-align:right;top:535.87px;font-size:11px;color:#333;">0,00</div>
<div style="left:1457.6px;top:557.28px;width:99.2px;height:20.25px;background:#f8f9f9;border-bottom:1.2px solid #e0e7ef;box-sizing:border-box"></div>
<div style="left:1578.08px;top:557.28px;width:290.72px;height:20.25px;background:#fbfbfb;border-bottom:1.2px solid #e0e7ef;box-sizing:border-box"></div>
<div class="t" style="left:1460.16px;top:557.0px;font-size:11.3px;color:#2a2a2a;">Status</div>
<div class="t" style="left:1581.6px;top:558.49px;font-size:11.3px;color:#333;">teil</div>
<div style="left:1457.6px;top:578.14px;width:99.2px;height:20.25px;background:#f8f9f9;border-bottom:1.2px solid #e0e7ef;box-sizing:border-box"></div>
<div style="left:1578.08px;top:578.14px;width:290.72px;height:20.25px;background:#fbfbfb;border-bottom:1.2px solid #e0e7ef;box-sizing:border-box"></div>
<div class="t" style="left:1460.16px;top:577.86px;font-size:11.3px;color:#2a2a2a;">Druckstatus</div>
<div class="t" style="left:1581.6px;top:579.34px;font-size:11.3px;color:#333;">gedruckt</div>
<div style="left:1454.4px;top:607.77px;width:418.72px;height:121.23px;background:#e9edf0"></div>
<svg style="left:1458.94px;top:613.88px" width="21" height="21" viewBox="0 0 21 21"><circle cx="10.5" cy="10.5" r="9.4" fill="#f4f7f9" stroke="#4f7ca5" stroke-width="1.2"/><path d="M6.3 12.3L10.5 8.2L14.7 12.3" fill="none" stroke="#3d6a94" stroke-width="1.8"/></svg>
<div class="t" style="left:1483.2px;top:615.86px;font-size:13.6px;color:#3f6d98;">Geschäftspartner</div>
<div style="left:1457.6px;top:641.66px;width:99.2px;height:19.84px;background:#f8f9f9;border-bottom:1.2px solid #e0e7ef;box-sizing:border-box"></div>
<div style="left:1578.08px;top:641.66px;width:290.72px;height:19.84px;background:#fbfbfb;border-bottom:1.2px solid #e0e7ef;box-sizing:border-box"></div>
<div class="t" style="left:1460.16px;top:641.17px;font-size:11.3px;color:#2a2a2a;">Nummer</div>
<svg style="left:1563.88px;top:646.98px" width="6" height="10" viewBox="0 0 6 10"><path d="M0.5 0.5L5.5 5L0.5 9.5Z" fill="#2a66d9"/></svg>
<div class="t" style="right:53.12px;text-align:right;top:640.9px;font-size:11px;color:#333;">90000</div>
<div style="left:1457.6px;top:662.85px;width:99.2px;height:60.75px;background:#f8f9f9"></div>
<div style="left:1578.08px;top:662.85px;width:290.72px;height:60.75px;background:#fdfdfd"></div>
<div class="t" style="left:1460.16px;top:661.76px;font-size:11.3px;color:#2a2a2a;">Name</div>
<div class="t" style="left:1581.6px;top:662.03px;font-size:11.3px;color:#222;">Axima Lindau</div>
</div></body></html>
